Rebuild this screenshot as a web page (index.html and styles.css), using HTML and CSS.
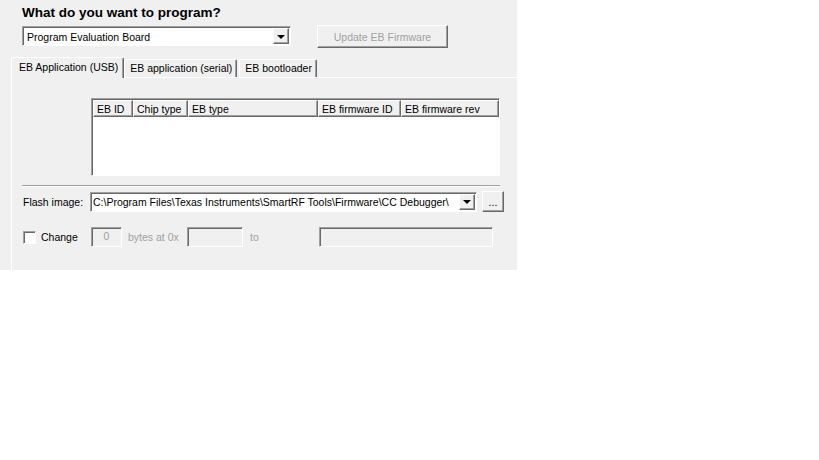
FILE: index.html
```html
<!DOCTYPE html>
<html lang="en">
<head>
    <meta charset="UTF-8">
    <title>Program</title>
    <link rel="stylesheet" href="styles.css">
</head>
<body>
    <div class="dialog">
        <h1 class="title">What do you want to program?</h1>
        <div class="top-row">
            <div class="combo wide">
                <span class="combo-text">Program Evaluation Board</span>
                <span class="combo-btn"><span class="arrow"></span></span>
            </div>
            <button class="btn update" disabled>Update EB Firmware</button>
        </div>
        <div class="tabs">
            <div class="tab active">EB Application (USB)</div>
            <div class="tab">EB application (serial)</div>
            <div class="tab">EB bootloader</div>
        </div>
        <div class="panel">
            <div class="list">
                <div class="list-head">
                    <div class="col c1">EB ID</div>
                    <div class="col c2">Chip type</div>
                    <div class="col c3">EB type</div>
                    <div class="col c4">EB firmware ID</div>
                    <div class="col c5">EB firmware rev</div>
                </div>
            </div>
            <div class="sep"></div>
            <div class="flash-row">
                <span class="label flash">Flash image:</span>
                <div class="combo path">
                    <span class="combo-text">C:\Program Files\Texas Instruments\SmartRF Tools\Firmware\CC Debugger\</span>
                    <span class="combo-btn"><span class="arrow"></span></span>
                </div>
                <button class="btn dots">...</button>
            </div>
            <div class="change-row">
                <span class="check"></span>
                <span class="label change">Change</span>
                <div class="field f-count">0</div>
                <span class="label dim bytes">bytes at 0x</span>
                <div class="field f-addr"></div>
                <span class="label dim to">to</span>
                <div class="field f-end"></div>
            </div>
        </div>
    </div>
</body>
</html>
```

FILE: styles.css
```css
body {
    margin: 0;
    background-color: #ffffff;
    font-family: "Liberation Sans", Arial, sans-serif;
    font-size: 10.5px;
    color: #000000;
}
.dialog {
    width: 517px;
    height: 270px;
    background-color: #f0f0f0;
    display: flex;
    flex-direction: column;
    overflow: hidden;
}
.title {
    margin: 5px 0 0 22px;
    font-size: 13.5px;
    font-weight: bold;
    line-height: 16px;
}
.top-row {
    display: flex;
    align-items: flex-start;
    margin: 4px 0 0 22px;
}
.combo {
    display: flex;
    align-items: center;
    box-sizing: border-box;
    height: 20px;
    background-color: #ffffff;
    border: 1px solid;
    border-color: #a0a0a0 #ffffff #ffffff #a0a0a0;
    box-shadow: inset 1px 1px 0 #696969;
    padding: 0 1px 0 4px;
}
.combo.wide {
    width: 269px;
    margin-top: 1px;
}
.combo-text {
    flex: 1;
    white-space: nowrap;
    overflow: hidden;
    line-height: 16px;
    margin-top: 1px;
}
.combo-btn {
    width: 16px;
    height: 16px;
    box-sizing: border-box;
    background-color: #f0f0f0;
    border: 1px solid;
    border-color: #ffffff #696969 #696969 #ffffff;
    box-shadow: inset -1px -1px 0 #a0a0a0;
    display: flex;
    align-items: center;
    justify-content: center;
}
.arrow {
    width: 0;
    height: 0;
    border-left: 4px solid transparent;
    border-right: 4px solid transparent;
    border-top: 4px solid #000000;
    margin-top: 1px;
}
.btn {
    box-sizing: border-box;
    background-color: #f0f0f0;
    border: 1px solid;
    border-color: #ffffff #696969 #696969 #ffffff;
    box-shadow: inset -1px -1px 0 #a0a0a0;
    font-family: inherit;
    font-size: 10.5px;
    padding: 0;
}
.btn.update {
    width: 131px;
    height: 23px;
    margin-left: 26px;
    color: #a0a0a0;
}
.tabs {
    display: flex;
    align-items: flex-end;
    margin: 9px 0 0 11px;
    height: 20px;
}
.tab {
    box-sizing: border-box;
    height: 18px;
    padding: 2px 4px 0 5px;
    margin-right: 2px;
    border: 1px solid;
    border-bottom: none;
    border-color: #ffffff #696969 #ffffff #ffffff;
    border-radius: 2px 2px 0 0;
    box-shadow: inset -1px 0 0 #a0a0a0;
    white-space: nowrap;
}
.tab.active {
    height: 21px;
    padding-top: 3px;
    padding-left: 7px;
    padding-right: 5px;
    margin-right: 0;
    position: relative;
    top: 1px;
    background-color: #f0f0f0;
}
.panel {
    flex: 1;
    margin-left: 11px;
    border-top: 1px solid #ffffff;
    border-left: 1px solid #ffffff;
    display: flex;
    flex-direction: column;
}
.list {
    width: 409px;
    height: 78px;
    box-sizing: border-box;
    margin: 20px 0 0 79px;
    background-color: #ffffff;
    border: 1px solid;
    border-color: #a0a0a0 #ffffff #ffffff #a0a0a0;
    box-shadow: inset 1px 1px 0 #696969;
    padding: 1px 0 0 1px;
}
.list-head {
    display: flex;
    height: 17px;
}
.col {
    box-sizing: border-box;
    height: 17px;
    padding: 2px 0 0 3px;
    background-color: #f0f0f0;
    border: 1px solid;
    border-color: #ffffff #696969 #696969 #ffffff;
    box-shadow: inset -1px -1px 0 #a0a0a0;
    white-space: nowrap;
    line-height: 13px;
}
.c1 { width: 40px; }
.c2 { width: 55px; }
.c3 { width: 130px; }
.c4 { width: 83px; }
.c5 { width: 98px; }
.sep {
    width: 478px;
    margin: 9px 0 0 10px;
    border-top: 1px solid #a0a0a0;
    border-bottom: 1px solid #ffffff;
}
.flash-row {
    display: flex;
    align-items: center;
    margin: 4px 0 0 11px;
}
.label {
    white-space: nowrap;
}
.label.flash {
    width: 67px;
}
.combo.path {
    width: 387px;
    padding-left: 2px;
}
.btn.dots {
    width: 22px;
    height: 21px;
    margin-left: 5px;
    line-height: 14px;
}
.change-row {
    display: flex;
    align-items: center;
    margin: 15px 0 0 11px;
}
.check {
    width: 13px;
    height: 13px;
    box-sizing: border-box;
    background-color: #ffffff;
    border: 1px solid;
    border-color: #a0a0a0 #ffffff #ffffff #a0a0a0;
    box-shadow: inset 1px 1px 0 #696969;
}
.label.change {
    margin-left: 5px;
    width: 50px;
}
.field {
    box-sizing: border-box;
    height: 20px;
    background-color: #f0f0f0;
    border: 1px solid;
    border-color: #a0a0a0 #ffffff #ffffff #a0a0a0;
    box-shadow: inset 1px 1px 0 #696969;
    color: #a0a0a0;
    text-align: center;
    line-height: 17px;
}
.f-count {
    width: 31px;
}
.dim {
    color: #a0a0a0;
}
.bytes {
    margin-left: 6px;
    width: 59px;
}
.f-addr {
    width: 56px;
}
.to {
    margin-left: 7px;
    width: 69px;
}
.f-end {
    width: 174px;
}
```
